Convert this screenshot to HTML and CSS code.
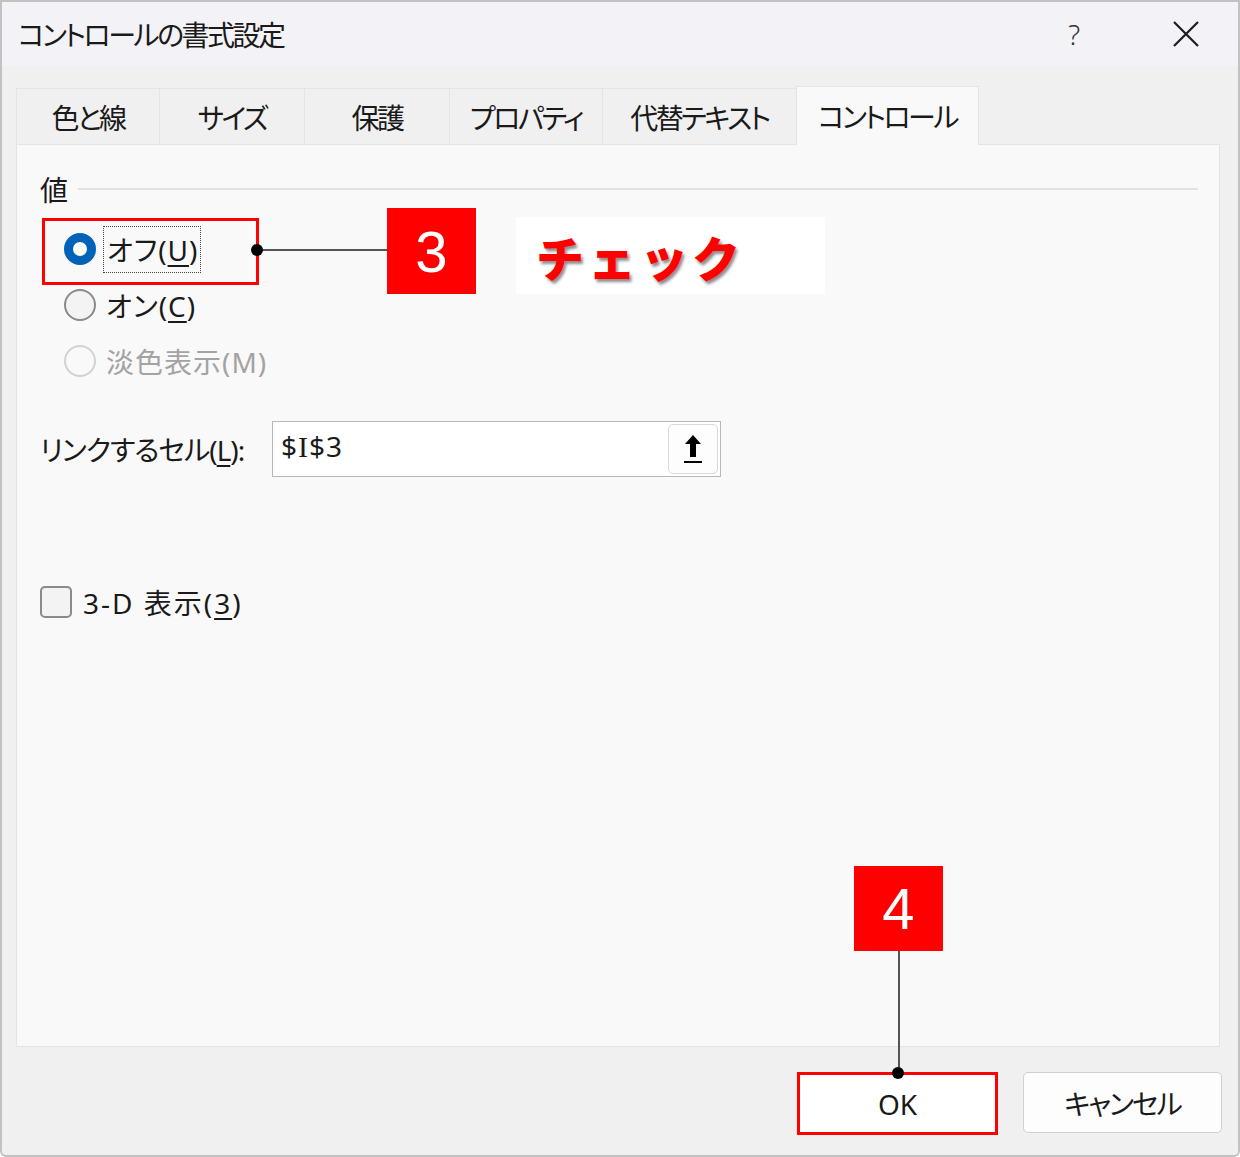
FILE: index.html
```html
<!DOCTYPE html>
<html lang="ja">

<head>
    <meta charset="UTF-8">
    <meta name="viewport" content="width=device-width, initial-scale=1.0">
    <title>コントロールの書式設定</title>
    <link rel="stylesheet" href="styles.css">
</head>

<body>
    <div class="window">
        <div class="titlebar">
            <span class="title">コントロールの書式設定</span>
            <span class="help">?</span>
            <span class="close">
                <svg width="28" height="28" viewBox="0 0 28 28">
                    <path d="M2 2 L26 26 M26 2 L2 26" stroke="#1c1c1c" stroke-width="2.2" fill="none" />
                </svg>
            </span>
        </div>

        <div class="tabs">
            <div class="tab" style="width: 144px">色と線</div>
            <div class="tab" style="width: 145px">サイズ</div>
            <div class="tab" style="width: 145px">保護</div>
            <div class="tab" style="width: 153px">プロパティ</div>
            <div class="tab" style="width: 194px">代替テキスト</div>
            <div class="tab active" style="width: 183px">コントロール</div>
        </div>

        <div class="panel">
            <div class="group-head">
                <span>値</span>
                <div class="rule"></div>
            </div>

            <div class="radios">
                <div class="radio checked">
                    <span class="circle"></span>
                    <span class="focus">オフ(<u>U</u>)</span>
                </div>
                <div class="radio">
                    <span class="circle"></span>
                    <span>オン(<u>C</u>)</span>
                </div>
                <div class="radio disabled">
                    <span class="circle"></span>
                    <span>淡色表示(M)</span>
                </div>
            </div>

            <div class="link-row">
                <span class="link-label">リンクするセル(<u>L</u>):</span>
                <div class="cell-input">
                    <span class="cell-value">$<span class="serif-i">I</span>$3</span>
                    <span class="pick">
                        <svg width="20" height="32" viewBox="0 0 20 32">
                            <path d="M10 2 L18 11 L13 11 L13 24 L7 24 L7 11 L2 11 Z" fill="#000" />
                            <rect x="1" y="28" width="18" height="2" fill="#000" />
                        </svg>
                    </span>
                </div>
            </div>

            <div class="check-row">
                <span class="box"></span>
                <span>3-D 表示(<u>3</u>)</span>
            </div>
        </div>

        <div class="footer">
            <button class="btn marked">OK</button>
            <button class="btn">キャンセル</button>
        </div>

        <!-- annotations -->
        <div class="mark-box"></div>
        <div class="leader leader-h"></div>
        <div class="pin pin-1"></div>
        <div class="badge badge-3">3</div>
        <div class="note">チェック</div>
        <div class="badge badge-4">4</div>
        <div class="leader leader-v"></div>
        <div class="pin pin-2"></div>
    </div>
</body>

</html>
```

FILE: styles.css
```css
body {
    margin: 0;
    background-color: #ffffff;
    font-family: "Noto Sans", "Noto Sans CJK JP", sans-serif;
    font-feature-settings: "palt";
    color: #1a1a1a;
}

.window {
    position: relative;
    width: 1240px;
    height: 1157px;
    box-sizing: border-box;
    border: 2px solid #c2c2c2;
    border-bottom-left-radius: 6px;
    border-bottom-right-radius: 6px;
    background-color: #f0f0f0;
    display: flex;
    flex-direction: column;
}

.titlebar {
    height: 64px;
    background-color: #f3f3f7;
    display: flex;
    align-items: center;
    padding-left: 16px;
    font-size: 28px;
}

.title {
    flex: 1;
    letter-spacing: -2.5px;
}

.help {
    color: #333;
    margin-right: 92px;
    font-weight: 300;
}

.close {
    display: flex;
    margin-right: 38px;
}

.tabs {
    display: flex;
    align-items: flex-end;
    margin: 20px 0 0 14px;
    height: 58px;
}

.tab {
    height: 56px;
    box-sizing: border-box;
    display: flex;
    align-items: center;
    justify-content: center;
    font-size: 28px;
    letter-spacing: -2.5px;
    border: 1px solid #e4e4e4;
    border-bottom: none;
    border-left: none;
    background-color: #f0f0f0;
}

.tab:first-child {
    border-left: 1px solid #e4e4e4;
}

.tab.active {
    height: 59px;
    margin-bottom: -1px;
    background-color: #f9f9f9;
    border-left: 1px solid #e4e4e4;
    margin-left: -1px;
    position: relative;
    z-index: 1;
}

.panel {
    width: 1204px;
    height: 903px;
    box-sizing: border-box;
    margin-left: 14px;
    background-color: #f9f9f9;
    border: 1px solid #e4e4e4;
    padding: 29px 21px 0 23px;
    display: flex;
    flex-direction: column;
}

.group-head {
    display: flex;
    align-items: center;
    font-size: 28px;
    line-height: 32px;
    gap: 10px;
}

.group-head .rule {
    flex: 1;
    height: 2px;
    background-color: #e2e2e2;
    margin-top: -3px;
}

.radios {
    display: flex;
    flex-direction: column;
    margin: 15px 0 0 24px;
}

.radio {
    height: 56px;
    display: flex;
    align-items: center;
    gap: 10px;
    font-size: 28px;
    letter-spacing: 1px;
}

.radio .circle {
    width: 32px;
    height: 32px;
    box-sizing: border-box;
    border-radius: 50%;
    border: 2px solid #8a8a8a;
    background-color: #f3f3f3;
}

.radio.checked .circle {
    border: 9px solid #0063b8;
    background-color: #ffffff;
}

.radio.disabled {
    color: #a3a3a3;
}

.radio.disabled .circle {
    border-color: #d2d2d2;
    background-color: #f9f9f9;
}

.radio .focus {
    border: 1px dotted #444;
    padding: 2px 2px 3px 3px;
    margin-left: -3px;
}

u {
    text-underline-offset: 4px;
    text-decoration-thickness: 2px;
}

.link-row {
    display: flex;
    align-items: center;
    margin-top: 32px;
    height: 56px;
    font-size: 28px;
}

.link-label {
    width: 232px;
    letter-spacing: -1px;
}

.cell-input {
    width: 449px;
    height: 56px;
    box-sizing: border-box;
    border: 1px solid #b8b8b8;
    background-color: #ffffff;
    display: flex;
    align-items: center;
    padding: 2px;
}

.cell-value {
    flex: 1;
    padding-left: 6px;
    margin-top: -6px;
    letter-spacing: 1px;
}

.serif-i {
    font-family: "Liberation Serif", serif;
    font-size: 30px;
}

.pick {
    width: 50px;
    height: 50px;
    box-sizing: border-box;
    border: 1px solid #d9d9d9;
    border-radius: 5px;
    background-color: #fdfdfd;
    display: flex;
    align-items: center;
    justify-content: center;
}

.check-row {
    display: flex;
    align-items: center;
    gap: 11px;
    margin-top: 105px;
    height: 40px;
    font-size: 28px;
    letter-spacing: 2px;
}

.check-row .box {
    width: 32px;
    height: 32px;
    box-sizing: border-box;
    border: 2px solid #8a8a8a;
    border-radius: 5px;
    background-color: #f3f3f3;
}

.footer {
    display: flex;
    justify-content: flex-end;
    align-items: flex-start;
    gap: 25px;
    margin-top: 25px;
    padding-right: 16px;
}

.btn {
    width: 199px;
    height: 61px;
    box-sizing: border-box;
    border: 1px solid #d0d0d0;
    border-radius: 5px;
    background-color: #fdfdfd;
    font-family: inherit;
    font-feature-settings: "palt";
    font-size: 28px;
    letter-spacing: -2px;
    color: #1a1a1a;
    padding: 0;
}

.btn.marked {
    width: 201px;
    height: 63px;
    border: 3px solid #ff0000;
    border-radius: 0;
    background-color: #ffffff;
    letter-spacing: 0;
}

/* annotations */
.mark-box {
    position: absolute;
    left: 40px;
    top: 216px;
    width: 217px;
    height: 67px;
    box-sizing: border-box;
    border: 3px solid #ff0000;
}

.leader {
    position: absolute;
    background-color: #555;
}

.leader-h {
    left: 255px;
    top: 247px;
    width: 130px;
    height: 2px;
}

.leader-v {
    left: 896px;
    top: 949px;
    width: 2px;
    height: 122px;
}

.pin {
    position: absolute;
    width: 12px;
    height: 12px;
    border-radius: 50%;
    background-color: #000;
}

.pin-1 {
    left: 249px;
    top: 242px;
}

.pin-2 {
    left: 890px;
    top: 1065px;
}

.badge {
    position: absolute;
    width: 89px;
    height: 86px;
    background-color: #ff0000;
    color: #ffffff;
    font-family: "Liberation Sans", sans-serif;
    font-size: 58px;
    display: flex;
    align-items: center;
    justify-content: center;
}

.badge-3 {
    left: 385px;
    top: 206px;
}

.badge-4 {
    left: 852px;
    top: 864px;
    height: 85px;
}

.note {
    position: absolute;
    left: 514px;
    top: 215px;
    width: 309px;
    height: 77px;
    box-sizing: border-box;
    background-color: #ffffff;
    color: #ff0000;
    font-family: "Noto Sans CJK JP", sans-serif;
    font-size: 48px;
    font-weight: 900;
    font-feature-settings: normal;
    letter-spacing: 4px;
    padding-left: 20px;
    display: flex;
    align-items: center;
    text-shadow: 2px 3px 3px rgba(0, 0, 0, 0.45);
}
```
